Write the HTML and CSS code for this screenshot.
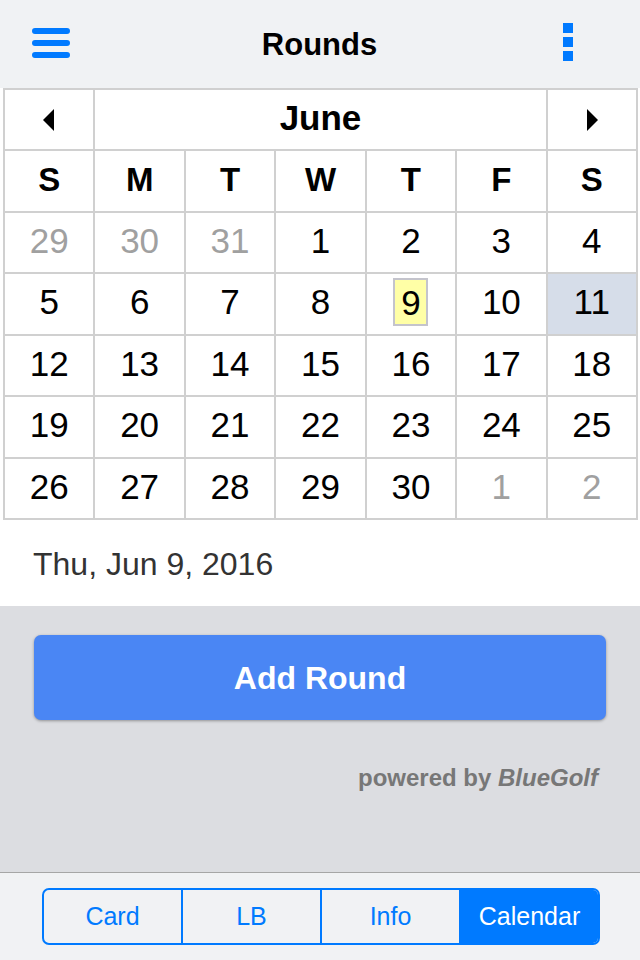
FILE: index.html
```html
<!DOCTYPE html>
<html lang="en">
<head>
    <meta charset="UTF-8">
    <meta name="viewport" content="width=device-width, initial-scale=1.0">
    <title>Rounds</title>
    <link rel="stylesheet" href="styles.css">
</head>
<body>

    <div class="topbar">
        <svg class="menu-icon" width="38" height="30" viewBox="0 0 38 30">
            <path d="M3 3H35M3 15H35M3 27H35" stroke="#007aff" stroke-width="6" stroke-linecap="round" fill="none"/>
        </svg>
        <div class="title">Rounds</div>
        <svg class="more-icon" width="10" height="38" viewBox="0 0 10 38">
            <rect x="0" y="0" width="10" height="10" fill="#007aff"/>
            <rect x="0" y="14" width="10" height="10" fill="#007aff"/>
            <rect x="0" y="28" width="10" height="10" fill="#007aff"/>
        </svg>
    </div>

    <div class="calendar">
        <div class="cell nav">
            <svg width="12" height="22" viewBox="0 0 12 22"><path d="M11 0V22L0 11Z" fill="#000"/></svg>
        </div>
        <div class="cell month">June</div>
        <div class="cell nav">
            <svg width="12" height="22" viewBox="0 0 12 22"><path d="M1 0V22L12 11Z" fill="#000"/></svg>
        </div>

        <div class="cell dayname">S</div>
        <div class="cell dayname">M</div>
        <div class="cell dayname">T</div>
        <div class="cell dayname">W</div>
        <div class="cell dayname">T</div>
        <div class="cell dayname">F</div>
        <div class="cell dayname">S</div>

        <div class="cell other">29</div>
        <div class="cell other">30</div>
        <div class="cell other">31</div>
        <div class="cell">1</div>
        <div class="cell">2</div>
        <div class="cell">3</div>
        <div class="cell">4</div>

        <div class="cell">5</div>
        <div class="cell">6</div>
        <div class="cell">7</div>
        <div class="cell">8</div>
        <div class="cell"><span class="today">9</span></div>
        <div class="cell">10</div>
        <div class="cell selected">11</div>

        <div class="cell">12</div>
        <div class="cell">13</div>
        <div class="cell">14</div>
        <div class="cell">15</div>
        <div class="cell">16</div>
        <div class="cell">17</div>
        <div class="cell">18</div>

        <div class="cell">19</div>
        <div class="cell">20</div>
        <div class="cell">21</div>
        <div class="cell">22</div>
        <div class="cell">23</div>
        <div class="cell">24</div>
        <div class="cell">25</div>

        <div class="cell">26</div>
        <div class="cell">27</div>
        <div class="cell">28</div>
        <div class="cell">29</div>
        <div class="cell">30</div>
        <div class="cell other">1</div>
        <div class="cell other">2</div>
    </div>

    <div class="date-line">Thu, Jun 9, 2016</div>

    <div class="content">
        <button class="add-btn">Add Round</button>
        <div class="powered">powered by <i>BlueGolf</i></div>
    </div>

    <div class="bottombar">
        <div class="segments">
            <div class="seg">Card</div>
            <div class="seg">LB</div>
            <div class="seg">Info</div>
            <div class="seg active">Calendar</div>
        </div>
    </div>

</body>
</html>
```

FILE: styles.css
```css
body {
    margin: 0;
    font-family: "Liberation Sans", Arial, sans-serif;
    background: #fff;
    width: 640px;
    height: 960px;
    display: flex;
    flex-direction: column;
}
.topbar {
    height: 88px;
    background: #f0f2f4;
    display: flex;
    align-items: center;
    justify-content: space-between;
    padding: 0 67px 0 32px;
}
.menu-icon {
    margin-top: -2px;
}
.more-icon {
    margin-top: -4px;
}
.title {
    font-size: 31px;
    font-weight: bold;
    color: #000;
    margin: 2px 0 0 6px;
}
.calendar {
    margin-left: 3px;
    width: 631px;
    height: 428px;
    padding: 2px;
    background: #d0d0d0;
    display: grid;
    grid-template-columns: repeat(7, 1fr);
    grid-template-rows: repeat(7, 1fr);
    gap: 2px;
}
.cell {
    background: #fff;
    display: flex;
    align-items: center;
    justify-content: center;
    font-size: 35px;
    color: #000;
    padding-bottom: 3px;
}
.nav {
    padding-bottom: 0;
}
.month {
    grid-column: span 5;
    font-weight: bold;
}
.dayname {
    font-weight: bold;
    font-size: 33px;
}
.other {
    color: #a0a0a0;
}
.selected {
    background: #d6dde9;
}
.today {
    display: inline-block;
    width: 31px;
    height: 44px;
    line-height: 46px;
    text-align: center;
    background: #ffffa6;
    border: 2px solid #c4c4cc;
}
.date-line {
    height: 86px;
    display: flex;
    align-items: center;
    padding: 2px 0 0 33px;
    box-sizing: border-box;
    font-size: 32px;
    color: #333;
    background: #fff;
}
.content {
    flex: 1;
    background: #dcdde1;
    padding: 29px 34px 0;
    display: flex;
    flex-direction: column;
}
.add-btn {
    height: 85px;
    padding-top: 3px;
    border: none;
    border-radius: 7px;
    background: #4a86f4;
    box-shadow: 0 1px 3px rgba(0, 0, 0, 0.35);
    color: #fff;
    font-family: "Liberation Sans", Arial, sans-serif;
    font-size: 32px;
    font-weight: bold;
}
.powered {
    margin-top: 44px;
    padding-right: 8px;
    text-align: right;
    font-size: 24px;
    font-weight: bold;
    color: #777;
}
.bottombar {
    height: 88px;
    border-top: 1px solid #a6a6a6;
    background: #f1f2f4;
    padding-top: 15px;
    box-sizing: border-box;
}
.segments {
    margin: 0 40px 0 42px;
    height: 57px;
    box-sizing: border-box;
    border: 2px solid #007aff;
    border-radius: 7px;
    overflow: hidden;
    display: flex;
}
.seg {
    flex: 1;
    display: flex;
    align-items: center;
    justify-content: center;
    font-size: 25px;
    color: #007aff;
    border-left: 2px solid #007aff;
}
.seg:first-child {
    border-left: none;
}
.seg.active {
    background: #007aff;
    color: #fff;
}
```
